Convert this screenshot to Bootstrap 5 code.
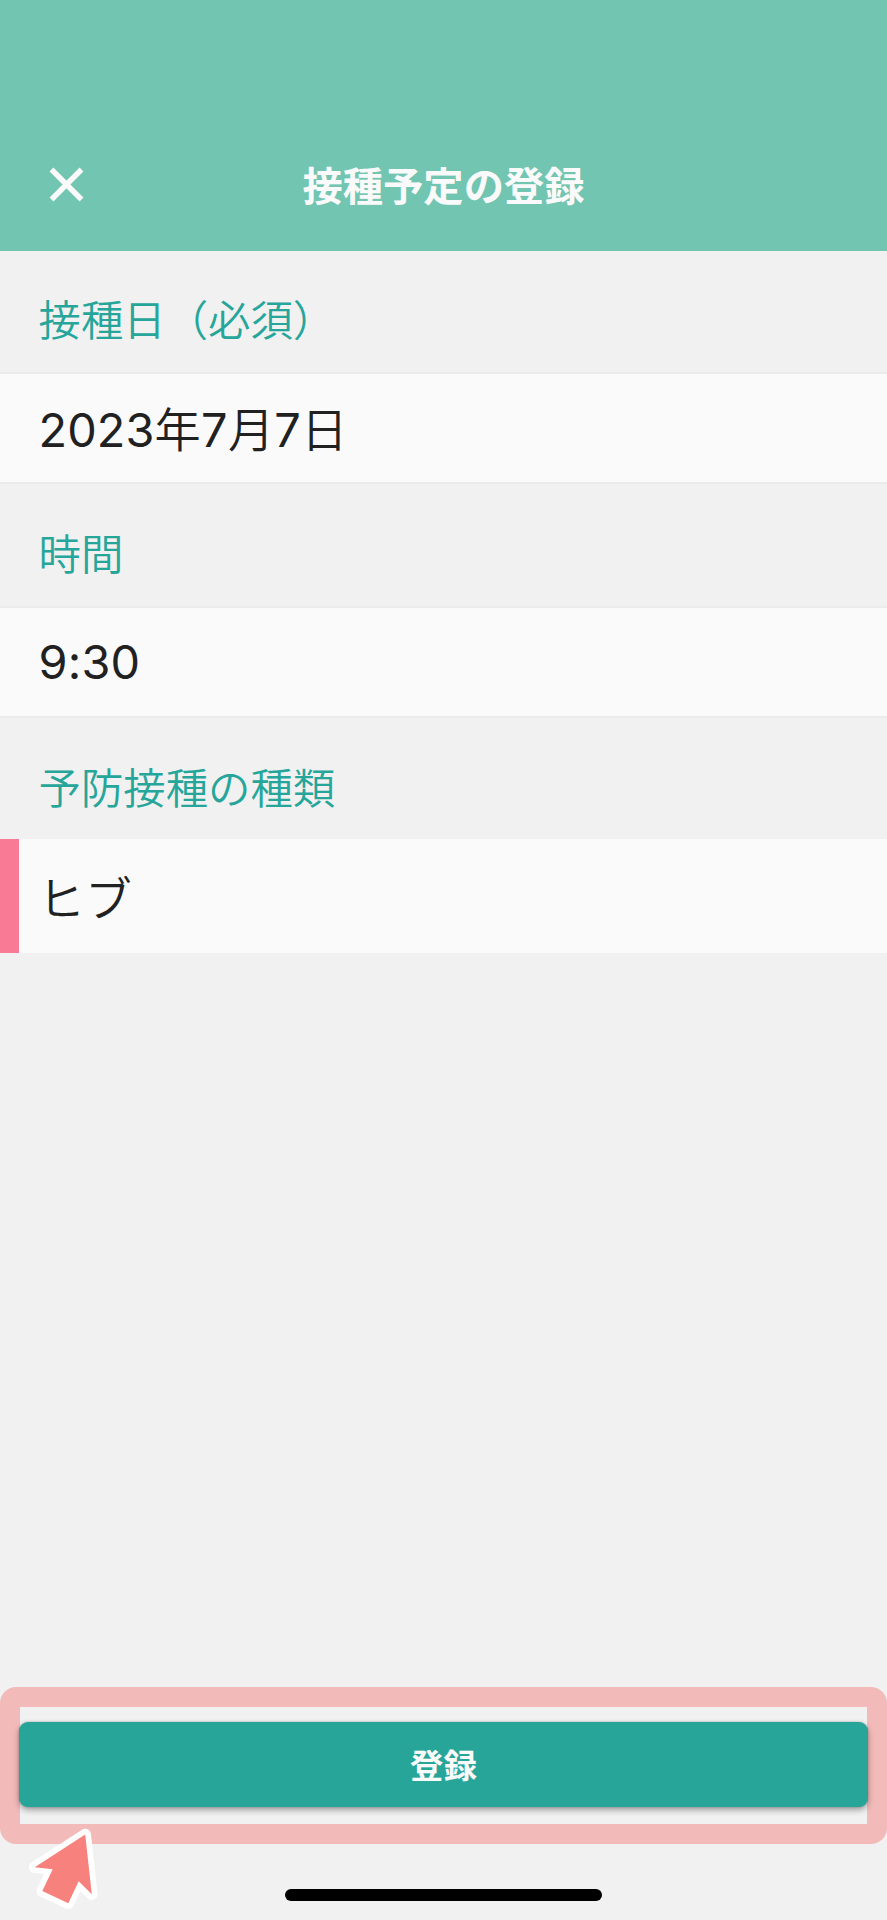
<!DOCTYPE html>
<html lang="ja">
<head>
<meta charset="utf-8">
<meta name="viewport" content="width=device-width, initial-scale=1">
<title>接種予定の登録</title>
<link href="https://cdn.jsdelivr.net/npm/bootstrap@5.3.0/dist/css/bootstrap.min.css" rel="stylesheet">
<style>
  body { background: #f1f1f1; color: #212121; font-family: Inter, "Noto Sans CJK JP", sans-serif; }
  .screen { height: 1920px; }
  .app-header { height: 250.6px; background: #72c5b1; padding-top: 117px; color: #fafafa; }
  .app-title { font: 700 40.3px/1 "Noto Sans CJK JP", sans-serif; }
  .close-btn { left: 48.5px; top: 167px; width: 35px; height: 35px; }
  .field-label { height: 123px; padding: 15px 38.5px 0; color: #26a69a; font: 350 42.4px/1 "Noto Sans CJK JP", sans-serif; border-bottom: 2px solid #ebebeb; }
  .field-value { height: 108.5px; padding: 1px 38.5px 0; background: #fafafa; font-size: 46.8px; line-height: 1; font-weight: 400; letter-spacing: .2px; }
  .field-value.cjk-text, .field-value span { font-family: "Noto Sans CJK JP", sans-serif; font-weight: 350; }
  .field-value.date-value { padding-top: 3px; letter-spacing: .1px; }
  .field-value span { font-size: 46.2px; margin: 0 .2px; }
  .ruled { height: 125.6px; border-top: 2px solid #ebebeb; }
  .ruled.last-label { height: 123px; }
  .field-value.vaccine { height: 114px; border-left: 19px solid #f87a95; padding-left: 19px; letter-spacing: .3px; }
  .highlight { height: 156.5px; border: 20px solid #f2bbba; border-radius: 16px; padding-top: 14.4px; margin-bottom: 45.5px; }
  .submit-btn { height: 85.3px; margin: 0 -1px; width: calc(100% + 2px); background: #27a599; color: #fafafa; border-radius: 9px; padding: 0 0 1.5px; font: 700 33.4px/1 "Noto Sans CJK JP", sans-serif; box-shadow: 0 3px 6px rgba(0,0,0,.35), 0 0 2px rgba(0,0,0,.25); }
  .submit-btn:hover { background: #27a599; color: #fafafa; }
  .home-bar { width: 317.5px; height: 12px; margin-bottom: 18.7px; background: #000; }
  .pointer { left: 24px; bottom: 5px; width: 80px; height: 95px; }
</style>
</head>
<body>
<div class="screen d-flex flex-column position-relative overflow-hidden">
  <header class="app-header d-flex align-items-center justify-content-center position-relative">
    <button class="close-btn btn p-0 border-0 position-absolute d-flex" aria-label="閉じる">
      <svg width="35" height="35" viewBox="0 0 35 35"><path d="M2.5 2.5 32.5 32.5M32.5 2.5 2.5 32.5" stroke="#fafafa" stroke-width="5.4" fill="none"/></svg>
    </button>
    <h1 class="app-title m-0">接種予定の登録</h1>
  </header>
  <main class="flex-grow-1">
    <div class="field-label d-flex align-items-center">接種日（必須）</div>
    <div class="field-value date-value d-flex align-items-center"><div>2023<span>年</span>7<span>月</span>7<span>日</span></div></div>
    <div class="field-label ruled d-flex align-items-center">時間</div>
    <div class="field-value d-flex align-items-center">9:30</div>
    <div class="field-label ruled last-label border-bottom-0 d-flex align-items-center">予防接種の種類</div>
    <div class="field-value cjk-text vaccine d-flex align-items-center">ヒブ</div>
  </main>
  <footer>
    <div class="highlight">
      <button class="submit-btn btn border-0 d-flex align-items-center justify-content-center">登録</button>
    </div>
    <div class="home-bar rounded-pill mx-auto"></div>
  </footer>
  <svg class="pointer position-absolute" viewBox="24 1820 80 95" aria-hidden="true">
    <path d="M85.2 1834.5 34.7 1867.3 52.7 1869.3 42.3 1891 68.3 1903.3 78.7 1881.3 91.8 1894.3Z" fill="#fff" stroke="#fff" stroke-width="11.5" stroke-linejoin="round"/>
    <path d="M85.2 1834.5 34.7 1867.3 52.7 1869.3 42.3 1891 68.3 1903.3 78.7 1881.3 91.8 1894.3Z" fill="#f7817d"/>
  </svg>
</div>
<script src="https://cdn.jsdelivr.net/npm/bootstrap@5.3.0/dist/js/bootstrap.bundle.min.js"></script>
</body>
</html>
